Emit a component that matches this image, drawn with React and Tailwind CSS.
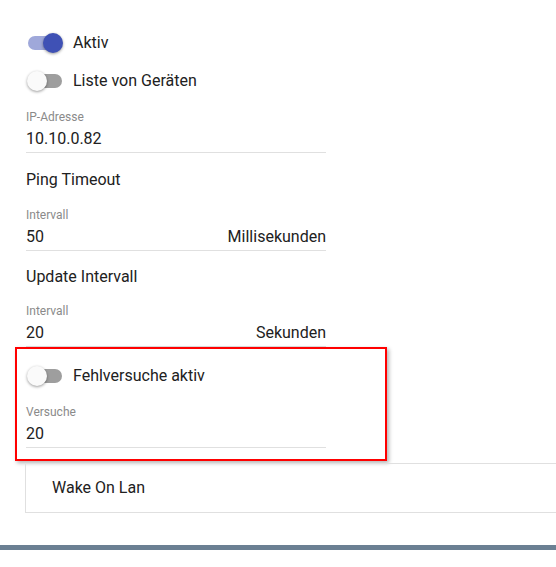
import React, { useState } from "react";

const Toggle = ({ checked, onChange }) => (
  <button
    type="button"
    onClick={() => onChange(!checked)}
    className="relative w-[36px] h-[20px] shrink-0"
  >
    <span
      className={`absolute left-[1px] right-[1px] top-[3px] h-[14px] rounded-full ${
        checked ? "bg-[#9fa8da]" : "bg-[#9e9e9e]"
      }`}
    ></span>
    <span
      className={`absolute top-0 w-[20px] h-[20px] rounded-full shadow-[0_1px_3px_rgba(0,0,0,0.4)] ${
        checked ? "left-[16px] bg-[#3f51b5]" : "left-0 bg-[#fafafa]"
      }`}
    ></span>
  </button>
);

const ToggleRow = ({ label, checked, onChange }) => (
  <div className="h-[38px] flex items-center gap-[10px] pl-[1px]">
    <Toggle checked={checked} onChange={onChange} />
    <span className="text-base text-[#212121]">{label}</span>
  </div>
);

const Field = ({ label, value, unit, className = "" }) => (
  <div className={`w-[300px] ${className}`}>
    <div className="text-xs leading-4 text-[#8a8a8a]">{label}</div>
    <div className="mt-[2px] flex justify-between text-base leading-6 text-[#212121] pb-[1px] border-b border-[#e0e0e0]">
      <span>{value}</span>
      {unit && <span>{unit}</span>}
    </div>
  </div>
);

export default function App() {
  const [aktiv, setAktiv] = useState(true);
  const [liste, setListe] = useState(false);
  const [fehl, setFehl] = useState(false);

  return (
    <div
      className="w-[556px] h-[567px] overflow-hidden bg-white"
      style={{ fontFamily: "Roboto, 'Liberation Sans', sans-serif" }}
    >
      <div className="pt-[24px] pl-[26px]">
        <ToggleRow label="Aktiv" checked={aktiv} onChange={setAktiv} />
        <ToggleRow label="Liste von Geräten" checked={liste} onChange={setListe} />

        <Field label="IP-Adresse" value="10.10.0.82" className="mt-[9px]" />

        <div className="mt-[15px] text-base leading-6 text-[#212121]">Ping Timeout</div>
        <Field label="Intervall" value="50" unit="Millisekunden" className="mt-[15px]" />

        <div className="mt-[14px] text-base leading-6 text-[#212121]">Update Intervall</div>
        <Field label="Intervall" value="20" unit="Sekunden" className="mt-[14px]" />

        <div className="ml-[-11px] w-[372px] border-2 border-[#ff0000] shadow-[2px_2px_4px_rgba(0,0,0,0.3)] pl-[9px] pt-[8px] pb-[11px]">
          <ToggleRow label="Fehlversuche aktiv" checked={fehl} onChange={setFehl} />
          <Field label="Versuche" value="20" className="mt-[9px]" />
        </div>

        <div className="mt-[2px] ml-[-1px] w-[560px] h-[50px] border border-[#e0e0e0] flex items-center pl-[26px] text-base text-[#212121]">
          Wake On Lan
        </div>
      </div>

      <div className="mt-[32px] h-[5px] bg-[#6b8093]"></div>
    </div>
  );
}
